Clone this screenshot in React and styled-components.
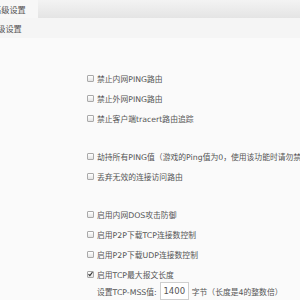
import styled, { createGlobalStyle } from 'styled-components';

const FONT = '"DejaVu Sans", "Noto Sans CJK SC", sans-serif';

const GlobalStyle = createGlobalStyle`
  html, body {
    margin: 0;
    padding: 0;
    background: #fafafa;
    overflow: hidden;
  }
  body {
    font-family: ${FONT};
  }
`;

const Page = styled.div`
  width: 300px;
  height: 300px;
  overflow: hidden;
  background: #fafafa;
  color: #555;
  font-size: 7.8px;
`;

const Header = styled.div`
  display: flex;
  height: 18px;
  background: #f7f7f7;
`;

const TabLabel = styled.div`
  width: 38px;
  flex: 0 0 38px;
  display: flex;
  align-items: center;
  overflow: hidden;
  white-space: nowrap;
  font-size: 8.2px;
  color: #555;
  & > span {
    margin-left: ${({ $shift }) => $shift}px;
  }
`;

const Bar = styled.div`
  flex: 1;
  background: linear-gradient(#f3f3f3, #e4e4e4);
`;

const SubTab = styled.div`
  height: 20px;
  background: #f5f5f5;
  display: flex;
  align-items: center;
  overflow: hidden;
  white-space: nowrap;
  font-size: 8.2px;
  & > span {
    margin-left: ${({ $shift }) => $shift}px;
  }
`;

const Content = styled.div`
  padding: 30px 0 0 87px;
  display: flex;
  flex-direction: column;
  gap: 18px;
`;

const Group = styled.div`
  display: flex;
  flex-direction: column;
`;

const Row = styled.label`
  height: 20px;
  display: flex;
  align-items: center;
  white-space: nowrap;
`;

const Box = styled.span`
  width: 5px;
  height: 5px;
  flex: 0 0 5px;
  margin-right: 3px;
  border: 1px solid #a9a9a9;
  border-radius: 1px;
  background: linear-gradient(#ffffff, #e4e4e4);
  display: flex;
  align-items: center;
  justify-content: center;
  svg {
    display: block;
  }
`;

const MssRow = styled.div`
  height: 18px;
  margin-top: -2px;
  padding-left: 10px;
  display: flex;
  align-items: center;
  white-space: nowrap;
`;

const NumInput = styled.div`
  width: 27px;
  height: 16px;
  margin: 0 3px 0 3px;
  border: 1px solid #cfcfcf;
  background: #fff;
  color: #555;
  font-size: 8.5px;
  display: flex;
  align-items: center;
  justify-content: center;
`;

const Check = ({ checked }) => (
  <Box>
    {checked && (
      <svg width="6" height="6" viewBox="0 0 6 6">
        <path d="M0.6 3.2 L2.2 4.9 L5.4 0.8" fill="none" stroke="#333" strokeWidth="1.3" />
      </svg>
    )}
  </Box>
);

const groups = [
  [
    { label: '禁止内网PING路由' },
    { label: '禁止外网PING路由' },
    { label: '禁止客户端tracert路由追踪' },
  ],
  [
    { label: '劫持所有PING值（游戏的Ping值为0，使用该功能时请勿禁PING）' },
    { label: '丢弃无效的连接访问路由' },
  ],
  [
    { label: '启用内网DOS攻击防御' },
    { label: '启用P2P下载TCP连接数控制' },
    { label: '启用P2P下载UDP连接数控制' },
    { label: '启用TCP最大报文长度', checked: true },
  ],
];

const App = () => (
  <>
    <GlobalStyle />
    <Page>
      <Header>
        <TabLabel $shift={-7}>
          <span>高级设置</span>
        </TabLabel>
        <Bar />
      </Header>
      <SubTab $shift={-11}>
        <span>高级设置</span>
      </SubTab>
      <Content>
        {groups.map((rows, gi) => (
          <Group key={gi}>
            {rows.map((r) => (
              <Row key={r.label}>
                <Check checked={r.checked} />
                {r.label}
              </Row>
            ))}
            {gi === groups.length - 1 && (
              <MssRow>
                设置TCP-MSS值:
                <NumInput>1400</NumInput>
                字节（长度是4的整数倍）
              </MssRow>
            )}
          </Group>
        ))}
      </Content>
    </Page>
  </>
);

export default App;
